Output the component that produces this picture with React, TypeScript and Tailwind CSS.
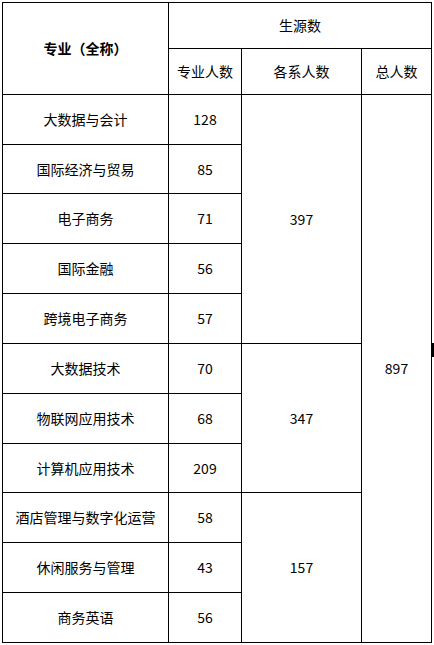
import React from "react";

const groups = [
  { total: "397", rows: [["大数据与会计", "128", 50], ["国际经济与贸易", "85", 49], ["电子商务", "71", 50], ["国际金融", "56", 50], ["跨境电子商务", "57", 50]] },
  { total: "347", rows: [["大数据技术", "70", 50], ["物联网应用技术", "68", 50], ["计算机应用技术", "209", 49]] },
  { total: "157", rows: [["酒店管理与数字化运营", "58", 50], ["休闲服务与管理", "43", 50], ["商务英语", "56", 50]] },
] as const;

const td = "border border-black text-center align-middle p-0 font-normal";

export default function App() {
  let first = true;
  return (
    <div className="relative w-[434px] h-[645px] bg-white pl-[2px] pt-[2px] text-[14px] text-black" style={{ fontFamily: '"Noto Sans CJK SC", "Noto Sans", sans-serif' }}>
      <table className="border-collapse table-fixed w-[429px]">
        <colgroup>
          <col className="w-[166px]" />
          <col className="w-[73px]" />
          <col className="w-[120px]" />
          <col className="w-[70px]" />
        </colgroup>
        <tbody>
          <tr className="h-[46px]">
            <th rowSpan={2} className={td + " !font-bold"}>专业（全称）</th>
            <th colSpan={3} className={td}>生源数</th>
          </tr>
          <tr className="h-[46px]">
            <th className={td}>专业人数</th>
            <th className={td}>各系人数</th>
            <th className={td}>总人数</th>
          </tr>
          {groups.map((g) =>
            g.rows.map((r, i) => {
              const showTotal = first;
              first = false;
              return (
                <tr key={r[0]} style={{ height: r[2] }}>
                  <td className={td}>{r[0]}</td>
                  <td className={td}>{r[1]}</td>
                  {i === 0 && <td rowSpan={g.rows.length} className={td}>{g.total}</td>}
                  {showTotal && <td rowSpan={11} className={td}>897</td>}
                </tr>
              );
            })
          )}
        </tbody>
      </table>
      <div className="absolute left-[432px] top-[343px] w-[2px] h-[14px] bg-black" />
    </div>
  );
}
